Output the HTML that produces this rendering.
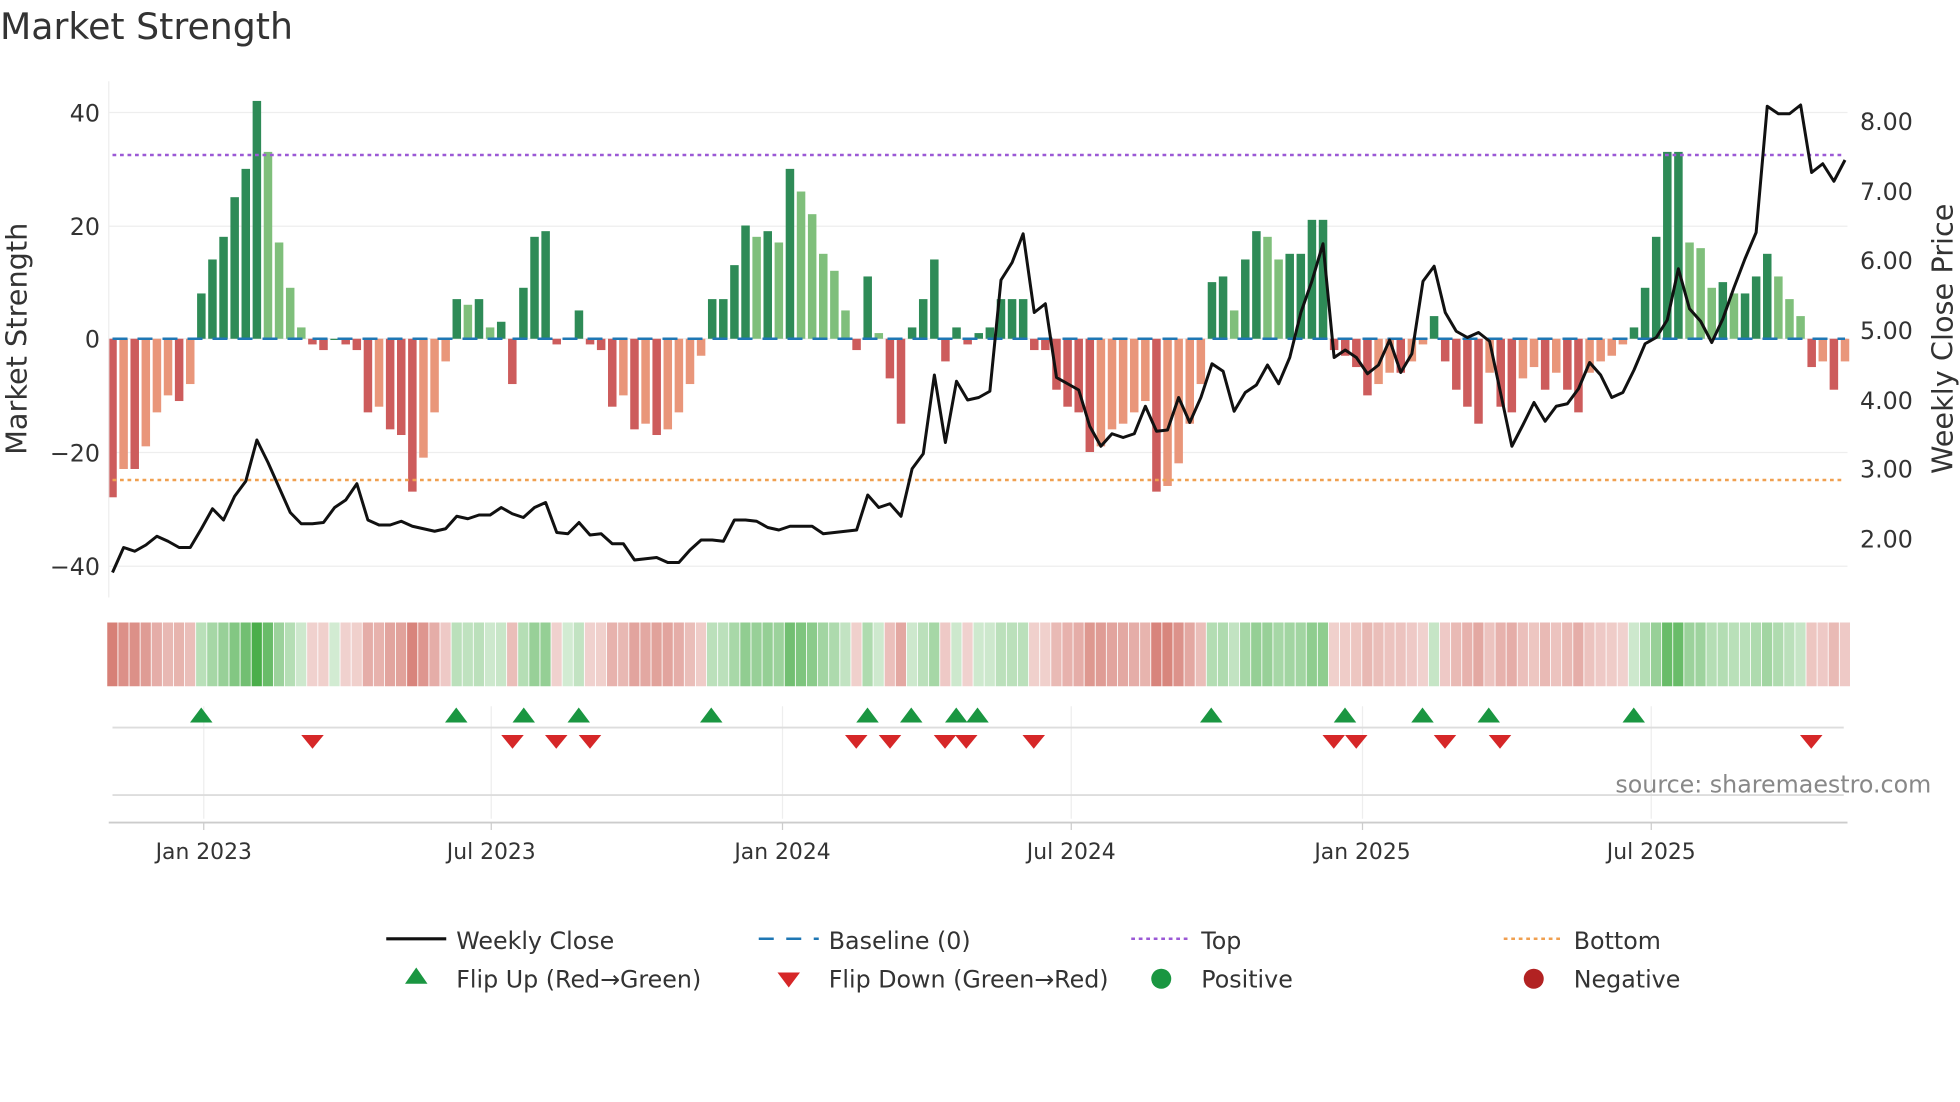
<!DOCTYPE html>
<html><head><meta charset="utf-8"><style>
html,body{margin:0;padding:0;background:#fff;width:1960px;height:1102px;overflow:hidden}
svg{display:block;font-family:"DejaVu Sans","Liberation Sans",sans-serif}
</style></head><body>
<svg id="s" width="1960" height="1102" viewBox="0 0 1568 881.6" xmlns="http://www.w3.org/2000/svg">
<rect width="1568" height="882" fill="#fff"/>
<text x="0" y="31" font-size="29" fill="#333">Market Strength</text>
<g id="grid" stroke="#eeeeee" stroke-width="1"></g>
<g id="bars"></g>
<g id="heat"></g>
<g id="mk"></g>
</svg>
<script>
const NS="http://www.w3.org/2000/svg";
const s=document.getElementById('s');
function el(t,a,p){const e=document.createElementNS(NS,t);for(const k in a)e.setAttribute(k,a[k]);(p||s).appendChild(e);return e;}
function tx(x,y,str,a){const e=el('text',Object.assign({x:x,y:y,'font-size':19,fill:'#333'},a||{}));e.textContent=str;return e;}
const V=[-28,-23,-23,-19,-13,-10,-11,-8,8,14,18,25,30,42,33,17,9,2,-1,-2,0,-1,-2,-13,-12,-16,-17,-27,-21,-13,-4,7,6,7,2,3,-8,9,18,19,-1,0,5,-1,-2,-12,-10,-16,-15,-17,-16,-13,-8,-3,7,7,13,20,18,19,17,30,26,22,15,12,5,-2,11,1,-7,-15,2,7,14,-4,2,-1,1,2,7,7,7,-2,-2,-9,-12,-13,-20,-19,-16,-15,-13,-11,-27,-26,-22,-15,-8,10,11,5,14,19,18,14,15,15,21,21,-2,-3,-5,-10,-8,-6,-6,-4,-1,4,-4,-9,-12,-15,-6,-12,-13,-7,-5,-9,-6,-9,-13,-6,-4,-3,-1,2,9,18,33,33,17,16,9,10,8,8,11,15,11,7,4,-5,-4,-9,-4];
const P=[458,438,441,436,429,433,438,438,423,407,416,397,385,352,370,390,410,419,419,418,406,400,387,416,420,420,417,421,423,425,423,413,415,412,412,406,411,414,406,402,426,427,418,428,427,435,435,448,447,446,450,450,440,432,432,433,416,416,417,422,424,421,421,421,427,426,425,424,396,406,403,413,375,363,300,354,305,320,318,313,224,210,187,250,243,302,307,312,341,357,347,350,347,325,345,344,318,338,318,291,297,329,314,308,292,307,286,250,225,195,286,280,286,299,292,272,298,283,225,213,250,265,270,266,273,315,357,340,322,337,325,323,311,290,300,318,314,296,275,270,256,215,247,257,274,255,230,207,186,85,91,91,84,138,131,145,128];
const n=V.length, x0=90, dx=(1476-90)/(n-1);
const y0=271, k=4.53;
const grid=document.getElementById('grid');
[90,181,271,362,453].forEach(y=>el('line',{x1:87,x2:1478,y1:y,y2:y},grid));
[163,393,626,857,1090,1321].forEach(x=>{el('line',{x1:x,x2:x,y1:565,y2:655},grid);});
el('line',{x1:87,x2:87,y1:65,y2:478,stroke:'#eee'});
const bars=document.getElementById('bars');
for(let i=0;i<n;i++){const v=V[i],p=i?V[i-1]:0,x=x0+i*dx-3.4;let c;
 if(v>=0)c=(v>=p)?'#2e8b57':'#7fbf7b';else c=(v<=p)?'#cd5c5c':'#e9967a';
 const h=Math.abs(v)*k;el('rect',{x:x,y:v>=0?y0-h:y0,width:6.8,height:Math.max(h,1),fill:c},bars);}
el('line',{x1:90,x2:1476,y1:271,y2:271,stroke:'#1f77b4','stroke-width':2,'stroke-dasharray':'12 8'});
el('line',{x1:90,x2:1476,y1:124,y2:124,stroke:'#9b59d6','stroke-width':2,'stroke-dasharray':'3 3'});
el('line',{x1:90,x2:1476,y1:384,y2:384,stroke:'#f0a050','stroke-width':2,'stroke-dasharray':'3 3'});
el('polyline',{points:P.map((y,i)=>(x0+i*dx).toFixed(1)+','+y).join(' '),fill:'none',stroke:'#111','stroke-width':2.4,'stroke-linejoin':'round'});
const heat=document.getElementById('heat');
for(let i=0;i<n;i++){const v=V[i],a=0.25+Math.min(Math.abs(v)/42,1)*0.75;
 el('rect',{x:x0+i*dx-4.2,y:498,width:8.2,height:51,fill:v>=0?'#2ca02c':'#c0392b','fill-opacity':(a*0.85).toFixed(2)},heat);}
el('line',{x1:90,x2:1475,y1:582,y2:582,stroke:'#ddd','stroke-width':1.5});
el('line',{x1:90,x2:1475,y1:636,y2:636,stroke:'#ddd','stroke-width':1.5});
el('line',{x1:87,x2:1478,y1:658,y2:658,stroke:'#ccc','stroke-width':1.5});
const ups=[161,365,419,463,569,694,729,765,782,969,1076,1138,1191,1307];
const dns=[250,410,445,472,685,712,756,773,827,1067,1085,1156,1200,1449];
ups.forEach(x=>el('polygon',{points:`${x-9},578 ${x+9},578 ${x},566`,fill:'#1a9641'}));
dns.forEach(x=>el('polygon',{points:`${x-9},588 ${x+9},588 ${x},599`,fill:'#d62728'}));
[[90,'40'],[181,'20'],[271,'0'],[362,'−20'],[453,'−40']].forEach(([y,t])=>tx(80,y+7,t,{'text-anchor':'end'}));
[[97,'8.00'],[153,'7.00'],[208,'6.00'],[264,'5.00'],[320,'4.00'],[375,'3.00'],[431,'2.00']].forEach(([y,t])=>tx(1488,y+7,t));
tx(0,0,'Market Strength',{'font-size':23,transform:'translate(21,271) rotate(-90)','text-anchor':'middle'});
tx(0,0,'Weekly Close Price',{'font-size':23,transform:'translate(1562,271) rotate(-90)','text-anchor':'middle'});
[[163,'Jan 2023'],[393,'Jul 2023'],[626,'Jan 2024'],[857,'Jul 2024'],[1090,'Jan 2025'],[1321,'Jul 2025']].forEach(([x,t])=>{el('line',{x1:x,x2:x,y1:658,y2:664,stroke:'#ccc'});tx(x,687,t,{'text-anchor':'middle','font-size':17.5});});
tx(1545,634,'source: sharemaestro.com',{'text-anchor':'end',fill:'#888','font-size':19});
el('line',{x1:309,x2:357,y1:751,y2:751,stroke:'#111','stroke-width':2.5});tx(365,759,'Weekly Close');
el('line',{x1:607,x2:655,y1:751,y2:751,stroke:'#1f77b4','stroke-width':2,'stroke-dasharray':'12 10'});tx(663,759,'Baseline (0)');
el('line',{x1:905,x2:953,y1:751,y2:751,stroke:'#9b59d6','stroke-width':2,'stroke-dasharray':'3 3'});tx(961,759,'Top');
el('line',{x1:1203,x2:1251,y1:751,y2:751,stroke:'#f0a050','stroke-width':2,'stroke-dasharray':'3 3'});tx(1259,759,'Bottom');
el('polygon',{points:'324,787 342,787 333,774',fill:'#1a9641'});tx(365,790,'Flip Up (Red→Green)');
el('polygon',{points:'622,778 640,778 631,790',fill:'#d62728'});tx(663,790,'Flip Down (Green→Red)');
el('circle',{cx:929,cy:783,r:8,fill:'#1a9641'});tx(961,790,'Positive');
el('circle',{cx:1227,cy:783,r:8,fill:'#b22222'});tx(1259,790,'Negative');
</script>
</body></html>
